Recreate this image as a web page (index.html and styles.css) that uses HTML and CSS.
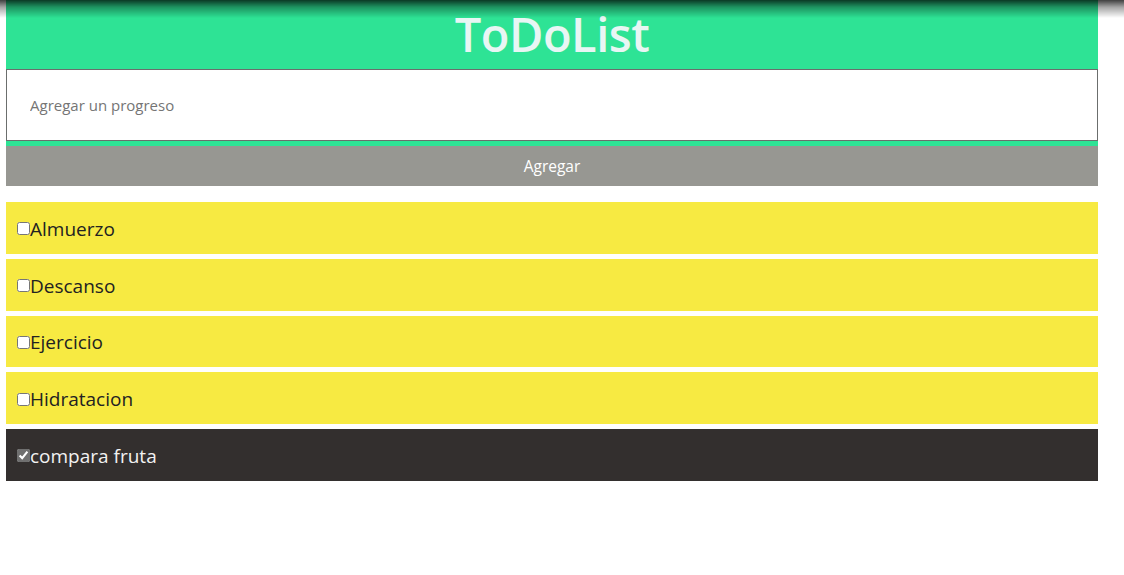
FILE: index.html
```html
<!DOCTYPE html>
<html lang="es">
<head>
<meta charset="utf-8">
<title>ToDoList</title>
<link rel="stylesheet" href="styles.css">
</head>
<body>
<div class="app">
  <header class="header">
    <h1 class="title">ToDoList</h1>
  </header>
  <form class="form">
    <input class="input" type="text" placeholder="Agregar un progreso">
    <button class="btn" type="button">Agregar</button>
  </form>
  <ul class="list">
    <li class="item"><input class="check" type="checkbox"><span>Almuerzo</span></li>
    <li class="item"><input class="check" type="checkbox"><span>Descanso</span></li>
    <li class="item"><input class="check" type="checkbox"><span>Ejercicio</span></li>
    <li class="item"><input class="check" type="checkbox"><span>Hidratacion</span></li>
    <li class="item done"><input class="check" type="checkbox" checked><span>compara fruta</span></li>
  </ul>
</div>
<div class="topshade"></div>
</body>
</html>
```
FILE: styles.css
```css
html, body {
  margin: 0;
  padding: 0;
  background: #ffffff;
  font-family: "Open Sans", "Noto Sans", sans-serif;
}
.app {
  width: 1092px;
  margin-left: 6px;
}
.header {
  background: #2ee395;
  height: 69px;
  display: flex;
  align-items: center;
  justify-content: center;
}
.title {
  margin: 0;
  font-size: 47px;
  font-weight: 600;
  color: #e8f6f4;
  line-height: 69px;
  letter-spacing: -0.5px;
}
.form {
  display: flex;
  flex-direction: column;
  background: #2ee395;
  margin: 0;
}
.input {
  box-sizing: border-box;
  height: 72px;
  margin: 0 0 5px 0;
  border: 1px solid #6b6e6d;
  background: #fff;
  padding: 0 0 0 23px;
  font-family: "Open Sans", "Noto Sans", sans-serif;
  font-size: 15px;
  color: #333;
  outline: none;
}
.input::placeholder {
  color: #757575;
}
.btn {
  height: 40px;
  border: 0;
  margin: 0;
  background: #979792;
  color: #ffffff;
  font-family: "Open Sans", "Noto Sans", sans-serif;
  font-size: 15.5px;
}
.list {
  list-style: none;
  margin: 16px 0 0 0;
  padding: 0;
  display: flex;
  flex-direction: column;
  gap: 5px;
}
.item {
  box-sizing: border-box;
  height: 51.75px;
  background: #f7ea42;
  color: #222222;
  display: flex;
  align-items: center;
  padding: 2px 0 0 11px;
  font-size: 19px;
}
.check {
  width: 13px;
  height: 13px;
  margin: 0;
}
.done {
  background: #332f2e;
  color: #f2f2f2;
}
.done .check {
  accent-color: #6f6f6f;
}
.topshade {
  position: fixed;
  left: 0;
  top: 0;
  width: 100%;
  height: 18px;
  background: linear-gradient(to bottom, rgba(0,0,0,0.75), rgba(0,0,0,0.35) 40%, rgba(0,0,0,0));
  pointer-events: none;
}
```
